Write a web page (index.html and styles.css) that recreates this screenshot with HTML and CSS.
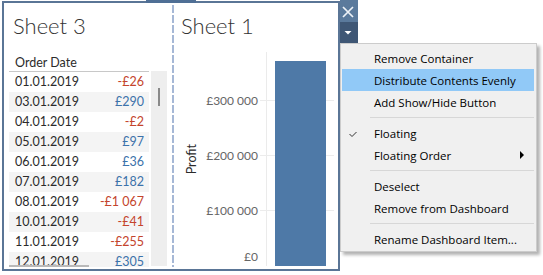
FILE: index.html
```html
<!DOCTYPE html>
<html lang="en">
<head>
    <meta charset="UTF-8">
    <meta name="viewport" content="width=device-width, initial-scale=1.0">
    <title>Dashboard Container</title>
    <link rel="stylesheet" href="styles.css">
</head>
<body>
    <div class="stage">
        <div class="frame">
            <span class="frame-grip"></span>

            <!-- Sheet 3: text table -->
            <section class="pane pane-table">
                <h1 class="sheet-title">Sheet 3</h1>
                <div class="table">
                    <div class="table-main">
                        <div class="table-head">Order Date</div>
                        <div class="rows">
                            <div class="row"><span>01.01.2019</span><span class="neg">-£26</span></div>
                            <div class="row"><span>03.01.2019</span><span class="pos">£290</span></div>
                            <div class="row"><span>04.01.2019</span><span class="neg">-£2</span></div>
                            <div class="row"><span>05.01.2019</span><span class="pos">£97</span></div>
                            <div class="row"><span>06.01.2019</span><span class="pos">£36</span></div>
                            <div class="row"><span>07.01.2019</span><span class="pos">£182</span></div>
                            <div class="row"><span>08.01.2019</span><span class="neg">-£1 067</span></div>
                            <div class="row"><span>10.01.2019</span><span class="neg">-£41</span></div>
                            <div class="row"><span>11.01.2019</span><span class="neg">-£255</span></div>
                            <div class="row"><span>12.01.2019</span><span class="pos">£305</span></div>
                        </div>
                        <span class="hscroll"></span>
                    </div>
                    <div class="vscroll"><span class="thumb"></span></div>
                </div>
            </section>

            <div class="divider"></div>

            <!-- Sheet 1: bar chart -->
            <section class="pane pane-chart">
                <h1 class="sheet-title">Sheet 1</h1>
                <div class="chart">
                    <div class="axis-title"><span>Profit</span></div>
                    <div class="axis">
                        <span class="tick" style="bottom: 158px;">£300 000</span>
                        <span class="tick" style="bottom: 103px;">£200 000</span>
                        <span class="tick" style="bottom: 48px;">£100 000</span>
                        <span class="tick" style="bottom: 2px;">£0</span>
                    </div>
                    <div class="plot">
                        <span class="plot-rule"></span>
                        <span class="gridline" style="bottom: 165px;"></span>
                        <span class="gridline" style="bottom: 110px;"></span>
                        <span class="gridline" style="bottom: 55px;"></span>
                        <span class="bar" style="height: 205px;"></span>
                    </div>
                </div>
            </section>

            <div class="frame-tools">
                <button class="tool tool-close" type="button">
                    <svg width="18" height="22" viewBox="0 0 18 22">
                        <path d="M3 7 L13 17 M13 7 L3 17" stroke="#eef2f7" stroke-width="1.7" fill="none"/>
                    </svg>
                </button>
                <button class="tool tool-menu" type="button">
                    <svg width="18" height="21" viewBox="0 0 18 21">
                        <polygon points="4.5,9 11.5,9 8,12.5" fill="#ffffff"/>
                    </svg>
                </button>
            </div>

            <ul class="context-menu">
                <li class="menu-item"><span class="menu-check"></span><span class="menu-label">Remove Container</span></li>
                <li class="menu-item is-active"><span class="menu-check"></span><span class="menu-label">Distribute Contents Evenly</span></li>
                <li class="menu-item"><span class="menu-check"></span><span class="menu-label">Add Show/Hide Button</span></li>
                <li class="menu-sep"></li>
                <li class="menu-item">
                    <span class="menu-check">
                        <svg width="32" height="22" viewBox="0 0 32 22">
                            <polyline points="7.5,12 10,14.5 14.5,10" stroke="#333" stroke-width="1" fill="none"/>
                        </svg>
                    </span>
                    <span class="menu-label">Floating</span>
                </li>
                <li class="menu-item">
                    <span class="menu-check"></span>
                    <span class="menu-label">Floating Order</span>
                    <svg class="menu-arrow" width="4" height="8" viewBox="0 0 4 8">
                        <polygon points="0,0 4,4 0,8" fill="#000"/>
                    </svg>
                </li>
                <li class="menu-sep"></li>
                <li class="menu-item"><span class="menu-check"></span><span class="menu-label">Deselect</span></li>
                <li class="menu-item"><span class="menu-check"></span><span class="menu-label">Remove from Dashboard</span></li>
                <li class="menu-sep"></li>
                <li class="menu-item"><span class="menu-check"></span><span class="menu-label">Rename Dashboard Item...</span></li>
            </ul>
        </div>
    </div>
</body>
</html>
```

FILE: styles.css
```css
/* Basic page */
* {
    box-sizing: border-box;
}
body {
    margin: 0;
    background: #fff;
    font-family: "Lato", "Liberation Sans", sans-serif;
    color: #333;
}

.stage {
    padding: 1px 0 0 2px;
}

/* Floating container */
.frame {
    position: relative;
    display: flex;
    width: 338px;
    height: 270px;
    border: 2px solid #5a7596;
    background: #fff;
}
.frame-grip {
    position: absolute;
    top: -3px;
    left: 142px;
    width: 50px;
    height: 3px;
    background: #4f6f95;
}

.pane {
    display: flex;
    flex-direction: column;
}
.pane-table {
    width: 168px;
    padding: 10px 0 0 5px;
}
.pane-chart {
    flex: 1;
    padding: 10px 0 0 7px;
}
.divider {
    width: 2px;
    margin: 2px 0;
    background: repeating-linear-gradient(to bottom, #a6b8d6 0 8px, transparent 8px 10px);
}

.sheet-title {
    margin: 0;
    font-size: 22px;
    font-weight: 300;
    line-height: 25px;
    color: #333;
}
.pane-table .sheet-title {
    padding-left: 4px;
}

/* Text table */
.table {
    display: flex;
    gap: 2px;
    height: 212px;
    margin-top: 17px;
}
.table-main {
    position: relative;
    width: 140px;
    overflow: hidden;
}
.table-head {
    height: 17px;
    padding-left: 6px;
    font-size: 12.5px;
    line-height: 16px;
    color: #2b2b2b;
    border-bottom: 1px solid #c8c8c8;
}
.row {
    display: flex;
    justify-content: space-between;
    height: 20px;
    padding: 0 5px 0 6px;
    font-size: 12.5px;
    line-height: 19px;
    color: #2b2b2b;
}
.row:nth-child(even) {
    background: #f4f4f4;
}
.neg {
    color: #c4442c;
}
.pos {
    color: #3c72aa;
}
.hscroll {
    position: absolute;
    left: 0;
    bottom: 0;
    width: 80px;
    height: 2px;
    background: #b9b9b9;
}
.vscroll {
    align-self: flex-start;
    width: 16px;
    height: 195px;
    margin-top: 16px;
    padding: 17px 0 0 7px;
    background: #eeeeee;
}
.thumb {
    display: block;
    width: 2px;
    height: 18px;
    background: #8a8a8a;
}

/* Bar chart */
.chart {
    display: flex;
    height: 214px;
    margin-top: 14px;
}
.axis-title {
    display: flex;
    align-items: center;
    justify-content: center;
    width: 20px;
    font-size: 12.5px;
    color: #2b2b2b;
}
.axis-title span {
    writing-mode: vertical-rl;
    transform: rotate(180deg);
}
.axis {
    position: relative;
    width: 59px;
}
.tick {
    position: absolute;
    right: 2px;
    font-size: 12px;
    line-height: 14px;
    color: #666;
    white-space: nowrap;
}
.plot {
    position: relative;
    width: 74px;
}
.plot-rule {
    position: absolute;
    top: 0;
    bottom: 0;
    left: 6px;
    width: 1px;
    background: #ebebeb;
}
.gridline {
    position: absolute;
    left: 0;
    right: 0;
    height: 1px;
    background: #ececec;
}
.bar {
    position: absolute;
    left: 15px;
    bottom: 0;
    width: 51px;
    background: #4e79a7;
}

/* Container buttons */
.frame-tools {
    position: absolute;
    top: -3px;
    left: 336px;
    display: flex;
    flex-direction: column;
}
.tool {
    display: block;
    width: 18px;
    padding: 0;
    border: none;
}
.tool svg {
    display: block;
}
.tool-close {
    height: 22px;
    background: #5b7a9c;
}
.tool-menu {
    height: 21px;
    background: #3f5775;
}

/* Context menu */
.context-menu {
    position: absolute;
    top: 40px;
    left: 336px;
    z-index: 2;
    width: 197px;
    margin: 0;
    padding: 3px 0 1px;
    list-style: none;
    background: #f0f0f0;
    border: 1px solid #cccccc;
    box-shadow: 3px 3px 3px rgba(0, 0, 0, 0.3);
    font-family: "Open Sans", "Liberation Sans", sans-serif;
    font-size: 11.5px;
    color: #000;
}
.menu-item {
    display: flex;
    align-items: center;
    height: 22px;
    margin: 0 2px 0 1px;
}
.menu-item.is-active {
    background: #91c9f7;
}
.menu-check {
    width: 32px;
    height: 22px;
    flex-shrink: 0;
}
.menu-check svg {
    display: block;
}
.menu-label {
    flex: 1;
}
.menu-arrow {
    margin-right: 10px;
}
.menu-sep {
    position: relative;
    height: 9px;
    margin: 0 2px 0 29px;
}
.menu-sep::after {
    content: "";
    position: absolute;
    top: 4px;
    left: 0;
    right: 0;
    height: 1px;
    background: #d7d7d7;
}
```
